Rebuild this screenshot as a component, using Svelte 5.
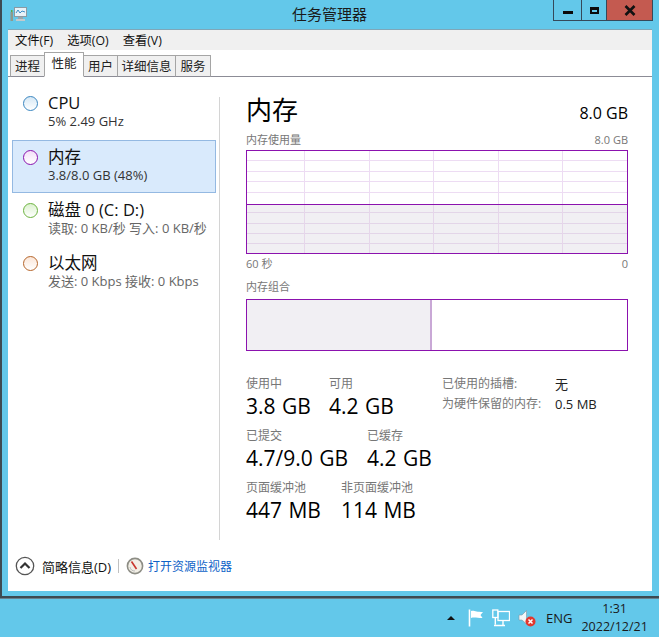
<script>
	const tabs = ['进程', '性能', '用户', '详细信息', '服务'];
	const resources = [
		{ name: 'CPU', detail: '5% 2.49 GHz', color: '#3a86c0', fill: '#d6e8f5' },
		{ name: '内存', detail: '3.8/8.0 GB (48%)', color: '#8b12ae', fill: '#f3dff8', selected: true },
		{ name: '磁盘 0 (C: D:)', detail: '读取: 0 KB/秒 写入: 0 KB/秒', color: '#6cb33f', fill: '#dcf2cf', muted: true },
		{ name: '以太网', detail: '发送: 0 Kbps 接收: 0 Kbps', color: '#b5652a', fill: '#fbe6d8', muted: true }
	];
	const vLines = [58.5, 123.5, 187.5, 252.5, 316.5];
	const upperLines = [10.5, 21.5, 31.5, 42.5];
	const lowerLines = [62.5, 73.5, 83.5, 93.5];
	const stats = [
		[
			{ label: '使用中', value: '3.8 GB', width: 83 },
			{ label: '可用', value: '4.2 GB' }
		],
		[
			{ label: '已提交', value: '4.7/9.0 GB', width: 121 },
			{ label: '已缓存', value: '4.2 GB' }
		],
		[
			{ label: '页面缓冲池', value: '447 MB', width: 95 },
			{ label: '非页面缓冲池', value: '114 MB' }
		]
	];
</script>

<div class="window">
	<header class="title">
		<svg class="app-icon" width="18" height="16" viewBox="0 0 18 16">
			<rect x="4.5" y="1.5" width="12" height="9" fill="#e8f2f8" stroke="#8a9aa4" />
			<path d="M6 7 L8 4 L10 7 L12 5 L15 6" fill="none" stroke="#3f8fc8" />
			<rect x="8" y="11" width="5" height="2" fill="#9aa5ab" />
			<rect x="6" y="13" width="9" height="2" fill="#c3cacd" />
			<rect x="0.5" y="6" width="2.5" height="9" fill="#8d9a8d" />
			<rect x="1" y="4" width="1.5" height="2" fill="#5fa84a" />
		</svg>
		<span class="title-text">任务管理器</span>
		<div class="controls">
			<div class="ctl min"><i></i></div>
			<div class="ctl max"><i></i></div>
			<div class="ctl close">
				<svg width="14" height="11" viewBox="0 0 14 11">
					<path d="M2.5 1 L11.5 10 M11.5 1 L2.5 10" stroke="#111" stroke-width="2.6" />
				</svg>
			</div>
		</div>
	</header>

	<div class="content">
		<nav class="menu">
			<span>文件(F)</span>
			<span>选项(O)</span>
			<span>查看(V)</span>
		</nav>
		<div class="tabs">
			{#each tabs as tab, i}
				<div class="tab" class:active={i === 1}>{tab}</div>
			{/each}
		</div>

		<div class="body">
			<aside class="side">
				{#each resources as r}
					<div class="res" class:selected={r.selected}>
						<span class="dot" style="border-color: {r.color}; background: linear-gradient({r.fill}, #fff)"></span>
						<div>
							<div class="res-name">{r.name}</div>
							<div class="res-detail" class:muted={r.muted}>{r.detail}</div>
						</div>
					</div>
				{/each}
			</aside>

			<main class="main">
				<div class="head">
					<h1>内存</h1>
					<span class="total">8.0 GB</span>
				</div>
				<div class="cap top">
					<span>内存使用量</span>
					<span>8.0 GB</span>
				</div>
				<svg class="graph" width="382" height="104" viewBox="0 0 382 104">
					<rect x="0" y="54" width="382" height="50" fill="#f1eff3" />
					{#each upperLines as y}
						<line x1="1" x2="381" y1={y} y2={y} stroke="#eddcf3" />
					{/each}
					{#each lowerLines as y}
						<line x1="1" x2="381" y1={y} y2={y} stroke="#e3d5e8" />
					{/each}
					{#each vLines as x}
						<line x1={x} x2={x} y1="1" y2="54" stroke="#eddcf3" />
						<line x1={x} x2={x} y1="54" y2="103" stroke="#e6d6ea" />
					{/each}
					<line x1="0" x2="382" y1="54.5" y2="54.5" stroke="#8b12ae" />
					<rect x="0.5" y="0.5" width="381" height="103" fill="none" stroke="#8b12ae" />
				</svg>
				<div class="cap axis">
					<span>60 秒</span>
					<span>0</span>
				</div>
				<div class="cap combo-label">内存组合</div>
				<div class="combo">
					<div class="used"></div>
				</div>

				<div class="stats">
					<div class="stat-rows">
						{#each stats as row}
							<div class="stat-row">
								{#each row as s}
									<div class="stat" style="width: {s.width ? s.width + 'px' : 'auto'}">
										<div class="stat-label">{s.label}</div>
										<div class="stat-value">{s.value}</div>
									</div>
								{/each}
							</div>
						{/each}
					</div>
					<dl class="facts">
						<dt>已使用的插槽:</dt>
						<dd>无</dd>
						<dt>为硬件保留的内存:</dt>
						<dd>0.5 MB</dd>
					</dl>
				</div>
			</main>
		</div>

		<footer class="foot">
			<svg width="20" height="20" viewBox="0 0 20 20">
				<circle cx="10" cy="10" r="8.7" fill="#fff" stroke="#555" stroke-width="1.3" />
				<path d="M5.5 12 L10 7.5 L14.5 12" fill="none" stroke="#333" stroke-width="2.2" />
			</svg>
			<span class="less">简略信息(D)</span>
			<span class="sep"></span>
			<svg width="18" height="18" viewBox="0 0 18 18">
				<circle cx="9" cy="9" r="7.6" fill="#f2efe6" stroke="#8d8d85" stroke-width="1.6" />
				<path d="M5.5 4.5 L10.5 12" stroke="#c8352b" stroke-width="1.6" />
				<path d="M4 10 A5 5 0 0 0 9 14" fill="none" stroke="#bbb" />
			</svg>
			<span class="link">打开资源监视器</span>
		</footer>
	</div>
</div>

<div class="taskbar">
	<span class="tri"></span>
	<svg width="16" height="18" viewBox="0 0 16 18">
		<path d="M1.5 0.5 V17.5" stroke="#fff" stroke-width="1.6" />
		<path d="M3 2 C6 1 8 3 15 3 L12.5 6 L14.5 9 C9 9 6 8 3 9 Z" fill="#fff" />
	</svg>
	<svg width="18" height="18" viewBox="0 0 18 18">
		<rect x="6" y="2.5" width="11.5" height="9" fill="none" stroke="#fff" stroke-width="1.3" />
		<rect x="0.8" y="1" width="5" height="7.5" fill="#63c8ea" stroke="#fff" stroke-width="1.3" />
		<path d="M3.3 8.5 V15.5 M2 16.5 H13 M11 12 V16" stroke="#fff" stroke-width="1.4" />
	</svg>
	<svg width="18" height="18" viewBox="0 0 18 18">
		<path d="M1 6 H4 L8.5 1.5 V15 L4 11 H1 Z" fill="#f1f6f8" stroke="#7f97a2" stroke-width="0.6" />
		<circle cx="12.5" cy="12.5" r="5" fill="#e2372e" />
		<path d="M10.5 10.5 L14.5 14.5 M14.5 10.5 L10.5 14.5" stroke="#fff" stroke-width="1.5" />
	</svg>
	<span class="lang">ENG</span>
	<div class="clock">
		<div>1:31</div>
		<div>2022/12/21</div>
	</div>
</div>

<style>
	:global(body) {
		margin: 0;
		background: #63c8ea;
		font-family: 'Open Sans', 'Noto Sans CJK SC', sans-serif;
		color: #000;
	}

	.window {
		height: 598px;
		box-sizing: border-box;
		border-left: 2px solid #3d4a52;
		border-bottom: 2px solid #3d4a52;
		box-shadow: 0 1px 0 #66808e;
	}

	.title {
		height: 30px;
		display: flex;
		align-items: flex-start;
		position: relative;
	}

	.app-icon {
		margin: 6px 0 0 8px;
	}

	.title-text {
		position: absolute;
		left: 290px;
		top: 3px;
		font-size: 15px;
		line-height: 22px;
		color: #1a1a1a;
	}

	.controls {
		display: flex;
		margin-left: auto;
		margin-right: 6px;
		height: 21px;
		box-sizing: border-box;
		border: 1px solid #35495a;
		border-top: none;
	}

	.ctl {
		display: flex;
		align-items: center;
		justify-content: center;
		box-sizing: border-box;
		height: 20px;
	}

	.min {
		width: 28px;
		border-right: 1px solid #35495a;
	}

	.min i {
		width: 10px;
		height: 3px;
		background: #0b0b0b;
		margin-top: 5px;
	}

	.max {
		width: 25px;
		border-right: 1px solid #35495a;
	}

	.max i {
		width: 5px;
		height: 2px;
		border: 2px solid #0b0b0b;
		border-top-width: 3px;
	}

	.close {
		width: 45px;
		background: #c45a50;
	}

	.content {
		margin-left: 6px;
		width: 644px;
		height: 561px;
		background: #fff;
		box-shadow: 0 -1px 0 #7fa7b8;
		display: flex;
		flex-direction: column;
	}

	.menu {
		height: 20px;
		background: #f0f0f0;
		display: flex;
		align-items: center;
		gap: 14px;
		padding-left: 7px;
		font-size: 12.3px;
		color: #111;
	}

	.tabs {
		height: 27px;
		box-sizing: border-box;
		display: flex;
		align-items: flex-end;
		padding-left: 2px;
		border-bottom: 1px solid #8c8c96;
		font-size: 12.5px;
	}

	.tab {
		height: 22px;
		box-sizing: border-box;
		padding: 0 3.5px;
		margin-right: -1px;
		margin-bottom: -1px;
		line-height: 21px;
		background: #f0f0f0;
		border: 1px solid #a5a5a5;
		border-bottom: 1px solid #8c8c96;
		min-width: 35px;
		text-align: center;
		color: #222;
	}

	.tab:last-child {
		min-width: 36px;
	}

	.tab.active {
		height: 25px;
		width: 40px;
		background: #fff;
		border-bottom-color: #fff;
		line-height: 21px;
		position: relative;
		padding-bottom: 4px;
	}

	.body {
		flex: 1;
		display: flex;
		min-height: 0;
		padding-top: 20px;
	}

	.side {
		width: 212px;
		height: 443px;
		box-sizing: border-box;
		border-right: 1px solid #d4d4d4;
		padding: 0 3px 0 4px;
		flex: none;
	}

	.res {
		height: 53px;
		box-sizing: border-box;
		border: 1px solid transparent;
		display: flex;
		gap: 10px;
		padding: 11px 0 0 10px;
	}

	.res:first-child {
		height: 43px;
		padding-top: 0;
	}

	.res.selected {
		background: #d9eafc;
		border-color: #94b9e2;
	}

	.dot {
		width: 15px;
		height: 15px;
		box-sizing: border-box;
		border: 1.5px solid;
		border-radius: 50%;
		margin-top: -2px;
		flex: none;
	}

	.res-name {
		font-size: 16.5px;
		line-height: 18px;
		margin-top: -4px;
		color: #111;
	}

	.res-detail {
		font-size: 13px;
		line-height: 16px;
		margin-top: 1px;
		color: #333;
		white-space: nowrap;
	}

	.res-detail.muted {
		color: #666;
	}

	.main {
		flex: 1;
		padding: 0 24px 0 26px;
		min-width: 0;
	}

	.head {
		display: flex;
		justify-content: space-between;
		align-items: flex-end;
		height: 33px;
		margin-top: -3px;
	}

	h1 {
		margin: 0;
		font-size: 26px;
		font-weight: 400;
		line-height: 33px;
		color: #000;
	}

	.total {
		font-size: 16px;
		line-height: 22px;
		margin-bottom: 3px;
	}

	.cap {
		display: flex;
		justify-content: space-between;
		font-size: 11px;
		line-height: 15px;
		color: #777;
	}

	.top {
		margin-top: 5px;
		margin-bottom: 3px;
	}

	.graph {
		display: block;
	}

	.axis {
		margin-top: 2px;
	}

	.combo-label {
		margin-top: 8px;
		margin-bottom: 5px;
	}

	.combo {
		height: 52px;
		box-sizing: border-box;
		border: 1px solid #8b12ae;
	}

	.used {
		width: 183px;
		height: 100%;
		background: #f1eff3;
		border-right: 2px solid #c9a8d6;
	}

	.stats {
		display: flex;
		margin-top: 25px;
	}

	.stat-rows {
		width: 196px;
		flex: none;
	}

	.stat-row {
		display: flex;
		height: 52px;
	}

	.stat {
		flex: none;
		white-space: nowrap;
	}

	.stat-label {
		font-size: 12px;
		line-height: 16px;
		color: #777;
	}

	.stat-value {
		font-size: 21px;
		word-spacing: 1px;
		line-height: 26px;
		margin-top: 1px;
	}

	.facts {
		margin: 0;
		display: grid;
		grid-template-columns: 113px auto;
		grid-auto-rows: 20px;
		font-size: 12px;
		line-height: 20px;
		align-self: flex-start;
		margin-top: -2px;
		white-space: nowrap;
	}

	.facts dt {
		color: #777;
	}

	.facts dd {
		margin: 0;
		color: #222;
		font-size: 13px;
	}

	.foot {
		height: 50px;
		flex: none;
		display: flex;
		align-items: center;
		padding: 0 0 0 7px;
		font-size: 12px;
		margin-top: auto;
	}

	.less {
		margin-left: 7px;
		font-size: 13px;
		color: #111;
	}

	.sep {
		width: 1px;
		height: 14px;
		background: #c0c0c0;
		margin: 0 7px;
	}

	.link {
		margin-left: 4px;
		color: #0e62c7;
	}

	.taskbar {
		height: 37px;
		display: flex;
		align-items: center;
		padding: 3px 0 0 447px;
		box-sizing: border-box;
		font-size: 13px;
		color: #1a1a1a;
	}

	.tri {
		width: 0;
		height: 0;
		border: 4px solid transparent;
		border-top: none;
		border-bottom: 4px solid #111;
		margin-right: 13px;
	}

	.taskbar svg {
		margin-right: 8px;
	}

	.lang {
		margin-left: 2px;
	}

	.clock {
		margin-left: 9px;
		text-align: center;
		font-size: 12.5px;
		line-height: 18.5px;
	}
</style>
